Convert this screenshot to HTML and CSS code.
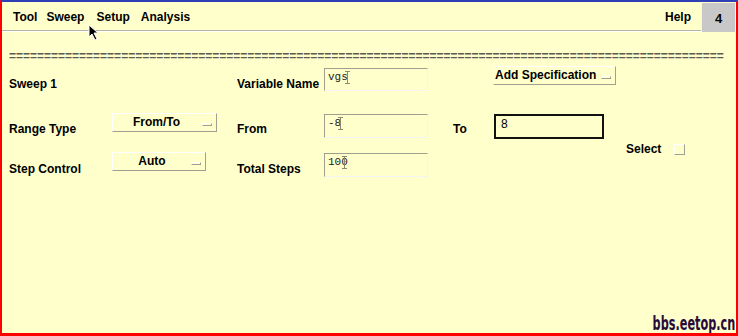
FILE: index.html
```html
<!DOCTYPE html>
<html>
<head>
<meta charset="utf-8">
<link rel="stylesheet" href="styles.css">
</head>
<body>
<div class="frame">
  <div class="menubar">
    <div class="menus">
      <span class="menu">Tool</span>
      <span class="menu">Sweep</span>
      <span class="menu m3">Setup</span>
      <span class="menu m4">Analysis</span>
      <span class="menu help">Help</span>
    </div>
    <div class="pagebox">4</div>
  </div>
  <div class="sep">======================================================================================================</div>
  <div class="form">
    <div class="lbl r1 c1">Sweep 1</div>
    <div class="lbl r1 c3">Variable Name</div>
    <div class="field r1 c4 f1"><span class="mono">vgs</span><svg class="ibeam" width="5" height="13" viewBox="0 0 5 13"><path d="M0 0.5H5M2.5 0.5V12.5M0 12.5H5" stroke="#8a8a70" stroke-width="1" fill="none"/></svg></div>
    <div class="btn addspec"><span>Add Specification</span><i class="ind"></i></div>

    <div class="lbl r3 c1 lb3">Range Type</div>
    <div class="btn r3 c2 fromto"><span>From/To</span><i class="ind"></i></div>
    <div class="lbl r3 c3 lb3">From</div>
    <div class="field r3 c4 f3"><span class="mono">-8</span><svg class="ibeam" width="5" height="13" viewBox="0 0 5 13"><path d="M0 0.5H5M2.5 0.5V12.5M0 12.5H5" stroke="#8a8a70" stroke-width="1" fill="none"/></svg></div>
    <div class="lbl r3 c6 lb3">To</div>
    <div class="field r3 c7 active"><span class="sans">8</span></div>

    <div class="lbl select">Select</div>
    <div class="check"></div>

    <div class="lbl r5 c1 lb5">Step Control</div>
    <div class="btn r5 c2 auto"><span>Auto</span><i class="ind"></i></div>
    <div class="lbl r5 c3 lb5">Total Steps</div>
    <div class="field r5 c4 f5"><span class="mono">10</span><span class="mono">0</span><svg class="ibeam ib5" width="5" height="13" viewBox="0 0 5 13"><path d="M0 0.5H5M2.5 0.5V12.5M0 12.5H5" stroke="#8a8a70" stroke-width="1" fill="none"/></svg></div>
  </div>
  <svg class="pointer" width="12" height="18" viewBox="0 0 12 18"><path d="M1 1L1 13L4 10L7 16L9 15L6 9L10 9Z" fill="#000" stroke="#fff" stroke-width="1"/></svg>
  <div class="mark">bbs.eetop.cn</div>
</div>
</body>
</html>
```

FILE: styles.css
```css
html, body {
  margin: 0;
  padding: 0;
  background: #ffffcc;
}
.frame {
  position: relative;
  width: 738px;
  height: 336px;
  box-sizing: border-box;
  border-top: 2px solid #2f3fb8;
  border-left: 2px solid #ff0000;
  border-right: 2px solid #ff0000;
  border-bottom: 3px solid #ff0000;
  background: #ffffcc;
  font-family: "Liberation Sans", Arial, sans-serif;
  font-weight: bold;
  font-size: 12px;
  color: #000;
  overflow: hidden;
}
.menubar {
  display: flex;
  height: 30px;
}
.menus {
  flex: 1;
  display: flex;
  align-items: center;
  padding-left: 11px;
  gap: 10px;
  border-bottom: 1px solid #b4b4a0;
  box-shadow: 0 1px 0 #ffffff;
  height: 29px;
  padding-top: 1px;
  box-sizing: border-box;
}
.menu {
  line-height: 14px;
}
.menu:first-child {
  margin-right: -1px;
}
.m3 { margin-left: 2px; }
.m4 { margin-left: 1px; }
.help {
  margin-left: auto;
  margin-right: 10px;
}
.pagebox {
  width: 34px;
  height: 29px;
  margin-top: 1px;
  margin-right: 1px;
  box-sizing: border-box;
  background: #c8c8c8;
  border-left: 1px solid #f4f4f4;
  display: flex;
  align-items: center;
  justify-content: center;
  font-size: 13px;
  padding-top: 1px;
}
.sep {
  margin: 17px 0 0 7px;
  width: 716px;
  white-space: nowrap;
  line-height: 14px;
  height: 14px;
  color: #5a5a50;
  font-size: 12px;
}
.form {
  margin-top: 3px;
  padding-left: 7px;
  display: grid;
  grid-template-columns: 103px 125px 87px 104px 25px 41px 109px 23px 48px 12px;
  grid-template-rows: 25px 21px 27px 13px 25px;
}
.lbl {
  line-height: 14px;
  white-space: nowrap;
}
.r1 { grid-row: 1; align-self: end; }
.r3 { grid-row: 3; }
.r5 { grid-row: 5; }
.c1 { grid-column: 1; }
.c2 { grid-column: 2; }
.c3 { grid-column: 3; }
.c4 { grid-column: 4; }
.c6 { grid-column: 6; }
.c7 { grid-column: 7; }
.lb3 { align-self: end; margin-bottom: 3px; }
.lb5 { align-self: end; margin-bottom: 1px; }

.field {
  box-sizing: border-box;
  border: 1px solid;
  border-color: #a0a090 #f4f4f4 #f4f4f4 #a0a090;
  padding: 2px 3px;
  display: flex;
  align-items: flex-start;
  align-self: start;
  width: 104px;
}
.f1 { height: 23px; margin-top: 2px; }
.f3 { height: 24px; margin-top: 2px; }
.f5 { height: 24px; margin-top: 1px; }
.mono {
  font-family: "Liberation Mono", "Courier New", monospace;
  font-weight: normal;
  font-size: 11px;
  line-height: 12px;
  color: #222;
}
.sans {
  font-family: "Liberation Sans", Arial, sans-serif;
  font-weight: normal;
  font-size: 12px;
  line-height: 14px;
}
.ibeam {
  margin-left: -3px;
}
.ib5 { margin-left: -6px; }
.active {
  width: 110px;
  height: 25px;
  margin-top: 2px;
  border: 2px solid #111;
  padding: 1px 5px;
  align-self: start;
}

.btn {
  box-sizing: border-box;
  height: 19px;
  border: 1px solid;
  border-color: #ffffff #a0a090 #a0a090 #ffffff;
  display: flex;
  align-items: flex-start;
  align-self: start;
  position: relative;
  line-height: 14px;
  padding-top: 1px;
}
.btn .ind {
  display: block;
  width: 10px;
  height: 3px;
  box-sizing: border-box;
  border: 1px solid;
  border-color: #ffffff #a0a090 #a0a090 #ffffff;
  position: absolute;
  right: 4px;
  top: 9px;
}
.addspec {
  grid-row: 1;
  grid-column: 7 / 11;
  width: 123px;
  margin-left: -1px;
  padding-left: 1px;
}
.fromto {
  width: 105px;
  margin-top: 1px;
  justify-content: center;
  padding-right: 20px;
  padding-left: 4px;
}
.auto {
  width: 94px;
  justify-content: center;
  padding-right: 18px;
  padding-left: 4px;
}
.select {
  grid-row: 4 / 6;
  grid-column: 9;
  align-self: start;
  margin-top: 3px;
}
.check {
  grid-row: 4 / 6;
  grid-column: 10;
  align-self: start;
  margin-top: 5px;
  width: 11px;
  height: 11px;
  box-sizing: border-box;
  border: 1px solid;
  border-color: #ffffff #a0a090 #a0a090 #ffffff;
}
.pointer {
  position: absolute;
  left: 86px;
  top: 22px;
}
.mark {
  position: absolute;
  right: 1px;
  bottom: 1px;
  font-family: "Liberation Sans Narrow", "DejaVu Sans Condensed", sans-serif;
  font-weight: bold;
  font-size: 19px;
  line-height: 17px;
  color: #2a0a3a;
  transform: scaleX(0.66);
  transform-origin: right bottom;
}
```
